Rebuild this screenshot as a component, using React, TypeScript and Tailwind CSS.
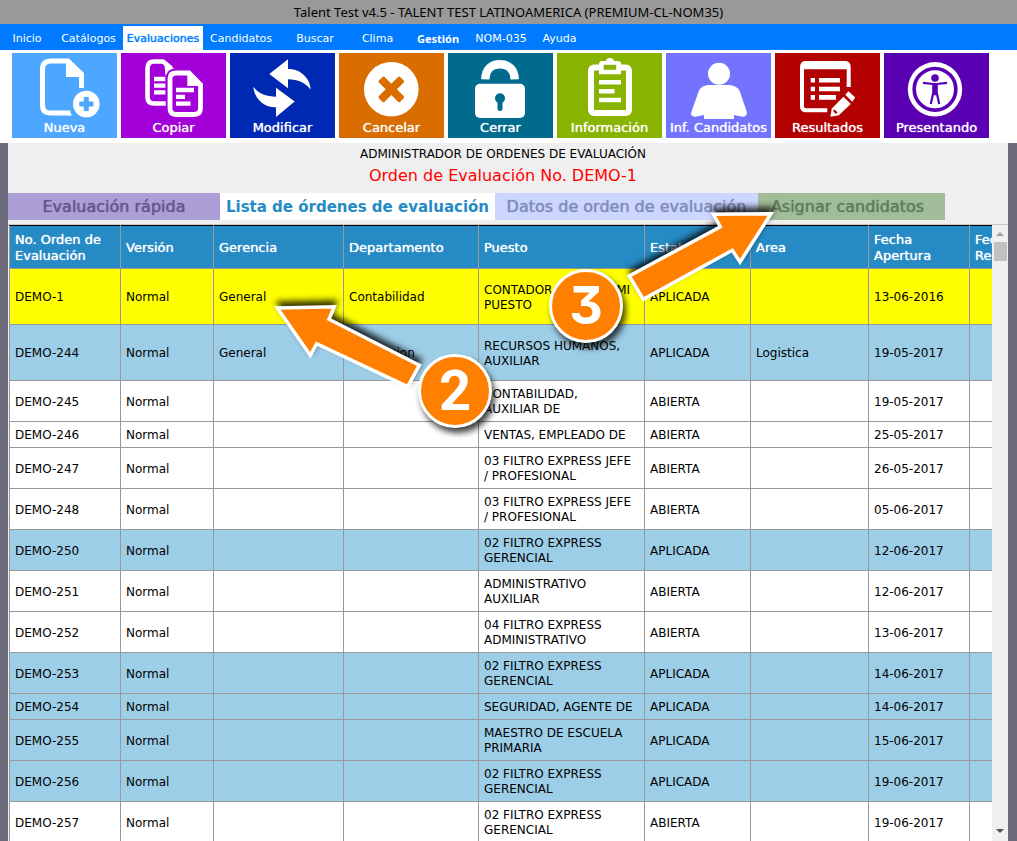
import type { ReactNode } from "react";

type MenuItem = { label: string; width: string; active?: boolean; strong?: boolean };

const menu: MenuItem[] = [
  { label: "Inicio", width: "w-[54px]" },
  { label: "Catálogos", width: "w-[69px]" },
  { label: "Evaluaciones", width: "w-[80px]", active: true },
  { label: "Candidatos", width: "w-[76px]" },
  { label: "Buscar", width: "w-[72px]" },
  { label: "Clima", width: "w-[53px]" },
  { label: "Gestión", width: "w-[68px]", strong: true },
  { label: "NOM-035", width: "w-[58px]" },
  { label: "Ayuda", width: "w-[59px]" },
];

const actions: { label: string; color: string; icon: ReactNode }[] = [
  {
    label: "Nueva",
    color: "bg-[#4da6ff]",
    icon: (
      <>
        <path d="M69.5 35V22L56 8H39Q30.5 8 30.5 16V52Q30.5 60 38.500 60H58.500" fill="none" stroke="#fff" strokeWidth="5" />
        <path d="M54 6H57L72 20V24H54Z" />
        <path d="M57 57.500L60 62.500H55Z" />
        <circle cx="74.3" cy="51" r="13.3" />
        <path d="M74.3 44V58M67.300 51H81.300" stroke="#4da6ff" strokeWidth="5" />
      </>
    ),
  },
  {
    label: "Copiar",
    color: "bg-[#a300d9]",
    icon: (
      <>
        <path d="M46 50.500H33Q26.500 50.500 26.500 44V15.500Q26.500 8.500 33 8.500H42L50 15" fill="none" stroke="#fff" strokeWidth="4.600" />
        <path d="M43 7L53 15.500L48 17.500L44.500 23Z" />
        <path d="M33 26H44.500M33 32.700H44.500M33 39.300H44.500" stroke="#fff" strokeWidth="4.300" />
        <path d="M55 20H68L79.500 32V55Q79.500 61.500 73 61.500H55Q49 61.500 49 55V26Q49 20 55 20Z" fill="#a300d9" stroke="#a300d9" strokeWidth="8.500" />
        <path d="M55 20H68L79.500 32V55Q79.500 61.500 73 61.500H55Q49 61.500 49 55V26Q49 20 55 20Z" fill="none" stroke="#fff" strokeWidth="4.800" />
        <path d="M66.300 18H69L82 31V33H66.300Z" />
        <path d="M55 37H73M55 43.900H64M55 50.700H69.500" stroke="#fff" strokeWidth="4.300" />
      </>
    ),
  },
  {
    label: "Modificar",
    color: "bg-[#0029b3]",
    icon: (
      <>
        <path d="M39.300 21L58 6.300V16C69 15.500 80 24 80.700 36.500C75 29.500 68 26.500 58 26.300V35.200Z" />
        <path d="M64.700 48.500L46 34.800V43.700C37 43.500 28 40.500 23.300 33.800C24.500 46 34 54.500 46 54.300V63.900Z" />
      </>
    ),
  },
  {
    label: "Cancelar",
    color: "bg-[#d96d00]",
    icon: (
      <>
        <circle cx="52.300" cy="36.300" r="27.300" />
        <g fill="#d96d00" transform="rotate(45 52.300 36.300)">
          <rect x="37.300" y="32.300" width="30" height="8" rx="1.500" />
          <rect x="48.300" y="21.300" width="8" height="30" rx="1.500" />
        </g>
      </>
    ),
  },
  {
    label: "Cerrar",
    color: "bg-[#006b8c]",
    icon: (
      <>
        <path d="M37.300 26.300C37.500 17 43 11.200 52 11.200S66.500 17 66.700 26.300" fill="none" stroke="#fff" strokeWidth="8.400" />
        <rect x="27" y="30.700" width="50" height="34.300" rx="5" />
        <circle cx="52" cy="45.300" r="5" fill="#006b8c" />
        <path d="M52 46V55.500" stroke="#006b8c" strokeWidth="5" strokeLinecap="round" />
      </>
    ),
  },
  {
    label: "Información",
    color: "bg-[#88b300]",
    icon: (
      <>
        <rect x="34" y="14.500" width="38" height="45.500" rx="3" fill="none" stroke="#fff" strokeWidth="6" />
        <path d="M42 21.300V11Q42 8 45 8H49Q49.500 5 53 5T57 8H61Q64 8 64 11V21.300Z" />
        <rect x="46.700" y="11.800" width="12.500" height="5" fill="#88b300" />
        <path d="M42 29.300H64M42 38.200H57.500M42 47H64" stroke="#fff" strokeWidth="4.400" />
      </>
    ),
  },
  {
    label: "Inf. Candidatos",
    color: "bg-[#7373ff]",
    icon: (
      <>
        <circle cx="53" cy="20.700" r="11" />
        <path d="M42 32H64Q71 33 73.500 37.500L81 59.500Q80.500 64 76.500 63.800L68 62V66H38V62L29.500 63.800Q25 64 25 60L33 37.500Q35 33 42 32Z" />
      </>
    ),
  },
  {
    label: "Resultados",
    color: "bg-[#b30000]",
    icon: (
      <>
        <path d="M52.300 57.300H31Q27 57.300 27 53.300V14Q27 10 31 10H70Q73.700 10 73.700 14V34" fill="none" stroke="#fff" strokeWidth="4" />
        <path d="M26 16.300V12Q26 8.500 30 8.500H71Q74.500 8.500 74.500 12V16.300Z" />
        <path d="M35.700 27.300H40M44 27.300H65M35.700 36H40M44 36H65M35.700 44.400H40M44 44.400H61" stroke="#fff" strokeWidth="4.600" />
        <path d="M55.300 63.800L56.800 55.500L68.500 43.700L75.800 51L63.800 62.300Z" />
        <path d="M70.300 41.800L73.500 38.300L80.200 44.600L77.200 48.800Z" />
        <path d="M58.800 57.300L61.800 60.300" stroke="#b30000" strokeWidth="2.200" />
      </>
    ),
  },
  {
    label: "Presentando",
    color: "bg-[#5900b3]",
    icon: (
      <>
        <circle cx="51" cy="36.300" r="27.200" />
        <circle cx="51" cy="36.300" r="20.800" fill="none" stroke="#5900b3" strokeWidth="3.600" />
        <circle cx="51" cy="25" r="3.800" fill="#5900b3" />
        <path d="M48.200 30H53.800V41L51 42.500L48.200 41Z" fill="#5900b3" />
        <path d="M39 29.800L49 31H53L63 29.800M49.300 39.500L46.800 51M52.700 39.500L55.200 51" fill="none" stroke="#5900b3" strokeWidth="2.200" />
      </>
    ),
  },
];

const tabs = [
  { label: "Evaluación rápida", style: "w-[212px] bg-[#ac9fd6] text-[#62558f] text-[16px] [text-shadow:0_0_1px]" },
  { label: "Lista de órdenes de evaluación", style: "w-[275px] bg-white text-[#268bc4] text-[15px] font-bold" },
  { label: "Datos de orden de evaluación", style: "w-[263px] bg-[#ccd6ff] text-[#7f8cb8] text-[16px] [text-shadow:0_0_1px]" },
  { label: "Asignar candidatos", style: "w-[187px] bg-[#a0bc99] text-[#5c7d57] pr-2 text-[16px] [text-shadow:0_0_1px]" },
];

const columns = [
  { label: "No. Orden de Evaluación", width: "w-[111px]" },
  { label: "Versión", width: "w-[93px]" },
  { label: "Gerencia", width: "w-[130px]" },
  { label: "Departamento", width: "w-[135px]" },
  { label: "Puesto", width: "w-[166px]" },
  { label: "Estatus", width: "w-[106px]" },
  { label: "Area", width: "w-[118px]" },
  { label: "Fecha Apertura", width: "w-[101px]" },
  { label: "Fecha Resultado", width: "w-[101px]" },
];

type Order = {
  id: string;
  puesto: string;
  estatus: "APLICADA" | "ABIERTA";
  fecha: string;
  gerencia?: string;
  departamento?: string;
  area?: string;
  selected?: boolean;
  tall?: boolean;
};

const orders: Order[] = [
  { id: "DEMO-1", gerencia: "General", departamento: "Contabilidad", puesto: "CONTADOR GENERAL MI PUESTO", estatus: "APLICADA", fecha: "13-06-2016", selected: true, tall: true },
  { id: "DEMO-244", gerencia: "General", departamento: "Produccion", puesto: "RECURSOS HUMANOS, AUXILIAR", estatus: "APLICADA", area: "Logistica", fecha: "19-05-2017", tall: true },
  { id: "DEMO-245", puesto: "CONTABILIDAD, AUXILIAR DE", estatus: "ABIERTA", fecha: "19-05-2017" },
  { id: "DEMO-246", puesto: "VENTAS, EMPLEADO DE", estatus: "ABIERTA", fecha: "25-05-2017" },
  { id: "DEMO-247", puesto: "03 FILTRO EXPRESS JEFE / PROFESIONAL", estatus: "ABIERTA", fecha: "26-05-2017" },
  { id: "DEMO-248", puesto: "03 FILTRO EXPRESS JEFE / PROFESIONAL", estatus: "ABIERTA", fecha: "05-06-2017" },
  { id: "DEMO-250", puesto: "02 FILTRO EXPRESS GERENCIAL", estatus: "APLICADA", fecha: "12-06-2017" },
  { id: "DEMO-251", puesto: "ADMINISTRATIVO AUXILIAR", estatus: "ABIERTA", fecha: "12-06-2017" },
  { id: "DEMO-252", puesto: "04 FILTRO EXPRESS ADMINISTRATIVO", estatus: "ABIERTA", fecha: "13-06-2017" },
  { id: "DEMO-253", puesto: "02 FILTRO EXPRESS GERENCIAL", estatus: "APLICADA", fecha: "14-06-2017" },
  { id: "DEMO-254", puesto: "SEGURIDAD, AGENTE DE", estatus: "APLICADA", fecha: "14-06-2017" },
  { id: "DEMO-255", puesto: "MAESTRO DE ESCUELA PRIMARIA", estatus: "APLICADA", fecha: "15-06-2017" },
  { id: "DEMO-256", puesto: "02 FILTRO EXPRESS GERENCIAL", estatus: "APLICADA", fecha: "19-06-2017" },
  { id: "DEMO-257", puesto: "02 FILTRO EXPRESS GERENCIAL", estatus: "ABIERTA", fecha: "19-06-2017" },
];

function rowColor(order: Order) {
  if (order.selected) return "bg-[#ffff00]";
  return order.estatus === "APLICADA" ? "bg-[#9dcee7]" : "bg-white";
}

function Cell({ children }: { children?: ReactNode }) {
  return <td className="border border-[#999] pt-1.5 pr-2.5 pb-1 pl-[5px] align-middle">{children}</td>;
}

function OrdersTable() {
  return (
    <table className="w-[1062px] table-fixed border-collapse text-[12px] leading-[15px]">
      <thead>
        <tr className="bg-[#268bc4] text-left text-[13px] leading-[16px] text-white">
          {columns.map((c) => (
            <th
              key={c.label}
              scope="col"
              className={`${c.width} border border-[#999] border-t-black px-[5px] pt-1.5 pb-1 font-normal [text-shadow:0_0_1px_#fff]`}
            >
              {c.label}
            </th>
          ))}
        </tr>
      </thead>
      <tbody>
        {orders.map((o) => (
          <tr key={o.id} className={`${rowColor(o)} ${o.tall ? "h-[56px]" : ""}`}>
            <Cell>{o.id}</Cell>
            <Cell>Normal</Cell>
            <Cell>{o.gerencia}</Cell>
            <Cell>{o.departamento}</Cell>
            <Cell>{o.puesto}</Cell>
            <Cell>{o.estatus}</Cell>
            <Cell>{o.area}</Cell>
            <Cell>{o.fecha}</Cell>
            <Cell />
          </tr>
        ))}
      </tbody>
    </table>
  );
}

function Scrollbar() {
  return (
    <div className="flex w-4 shrink-0 flex-col items-center bg-[#f0f0f0]" aria-hidden="true">
      <svg className="mt-1.5 h-[11px] w-2" viewBox="0 0 8 11" fill="#a3a3a3">
        <path d="M0 5L4 1L8 5Z" />
      </svg>
      <div className="h-[19px] w-[13px] bg-[#c1c1c1]" />
      <svg className="mt-auto mb-[7px] h-[6px] w-2" viewBox="0 0 8 6" fill="#505050">
        <path d="M0 1L4 5L8 1Z" />
      </svg>
    </div>
  );
}

function Arrow({ className, points }: { className: string; points: string }) {
  return (
    <svg
      className={`absolute h-[100px] w-[160px] overflow-visible drop-shadow-[1px_-5px_3px_rgba(0,0,0,0.8)] ${className}`}
      viewBox="0 0 160 100"
      aria-hidden="true"
    >
      <polygon points={points} fill="#ff8000" stroke="#fff" strokeWidth="3.500" />
    </svg>
  );
}

function StepBadge({ className, children }: { className: string; children: ReactNode }) {
  return (
    <div
      className={`absolute flex size-[74px] items-center justify-center rounded-full border-[3px] border-white bg-[#ff8000] leading-none font-bold text-white shadow-[3px_5px_6px_rgba(0,0,0,0.75)] ${className}`}
    >
      {children}
    </div>
  );
}

export default function App() {
  return (
    <div className="relative flex h-screen flex-col overflow-hidden bg-white font-['DejaVu_Sans',Verdana,sans-serif] text-black">
      <header className="bg-[#999] text-center font-['Noto_Sans',sans-serif] text-[13px] leading-6">
        Talent Test v4.5 - TALENT TEST LATINOAMERICA (PREMIUM-CL-NOM35)
      </header>

      <nav className="bg-[#007bff] pt-0.5">
        <ul className="flex text-center text-[11px] text-white">
          {menu.map((m) => (
            <li key={m.label} className={`${m.width} ${m.active ? "bg-white text-[#007bff] [text-shadow:0_0_1px_#007bff]" : ""}`}>
              <a href="#" className={`block pt-0.5 leading-[22px] ${m.strong ? "font-['Noto_Sans',sans-serif] font-bold" : ""}`}>
                {m.label}
              </a>
            </li>
          ))}
        </ul>
      </nav>

      <div className="flex gap-1 px-3 pt-[3px] pb-[5px]">
        {actions.map((a) => (
          <button key={a.label} type="button" className={`flex h-[85px] w-[105px] shrink-0 flex-col items-center ${a.color}`}>
            <svg className="h-[67px] w-[105px]" viewBox="0 0 105 67" fill="#fff" aria-hidden="true">
              {a.icon}
            </svg>
            <span className="text-[13px] leading-4 whitespace-nowrap text-white [text-shadow:0_0_1px_#fff]">{a.label}</span>
          </button>
        ))}
      </div>

      <main className="flex min-h-0 flex-1 flex-col border-r-[9px] border-l-8 border-[#6b6b7b] bg-[#efefef]">
        <div className="pr-2.5 text-center">
          <h1 className="pt-0.5 text-[12px] leading-[18px]">ADMINISTRADOR DE ORDENES DE EVALUACIÓN</h1>
          <h2 className="pt-px text-[16px] leading-6 text-[#ff0000]">Orden de Evaluación No. DEMO-1</h2>
        </div>

        <div className="mt-[5px] mb-1 flex">
          {tabs.map((t) => (
            <button key={t.label} type="button" className={`h-[27px] shrink-0 leading-[26px] whitespace-nowrap ${t.style}`}>
              {t.label}
            </button>
          ))}
        </div>

        <div className="flex min-h-0 flex-1 border-t border-[#c8c8c8]">
          <div className="min-w-0 flex-1 overflow-hidden pl-px">
            <OrdersTable />
          </div>
          <Scrollbar />
        </div>
      </main>

      <Arrow className="top-[300px] left-[270px]" points="7.300,8 64.300,6.700 59,19.300 149.300,65.300 137.700,86.700 46.700,43.700 40.300,55.300" />
      <Arrow className="top-[200px] left-[620px]" points="151,13.700 93.300,14.300 100.300,26.700 9.300,76 23.300,99.300 112.300,50.300 120,62" />
      <StepBadge className="top-[354px] left-[418px] font-['Roboto',sans-serif] text-[56px]">2</StepBadge>
      <StepBadge className="top-[269px] left-[549px] font-['Inter',sans-serif] text-[52px] [font-feature-settings:'cv09']">3</StepBadge>
    </div>
  );
}
